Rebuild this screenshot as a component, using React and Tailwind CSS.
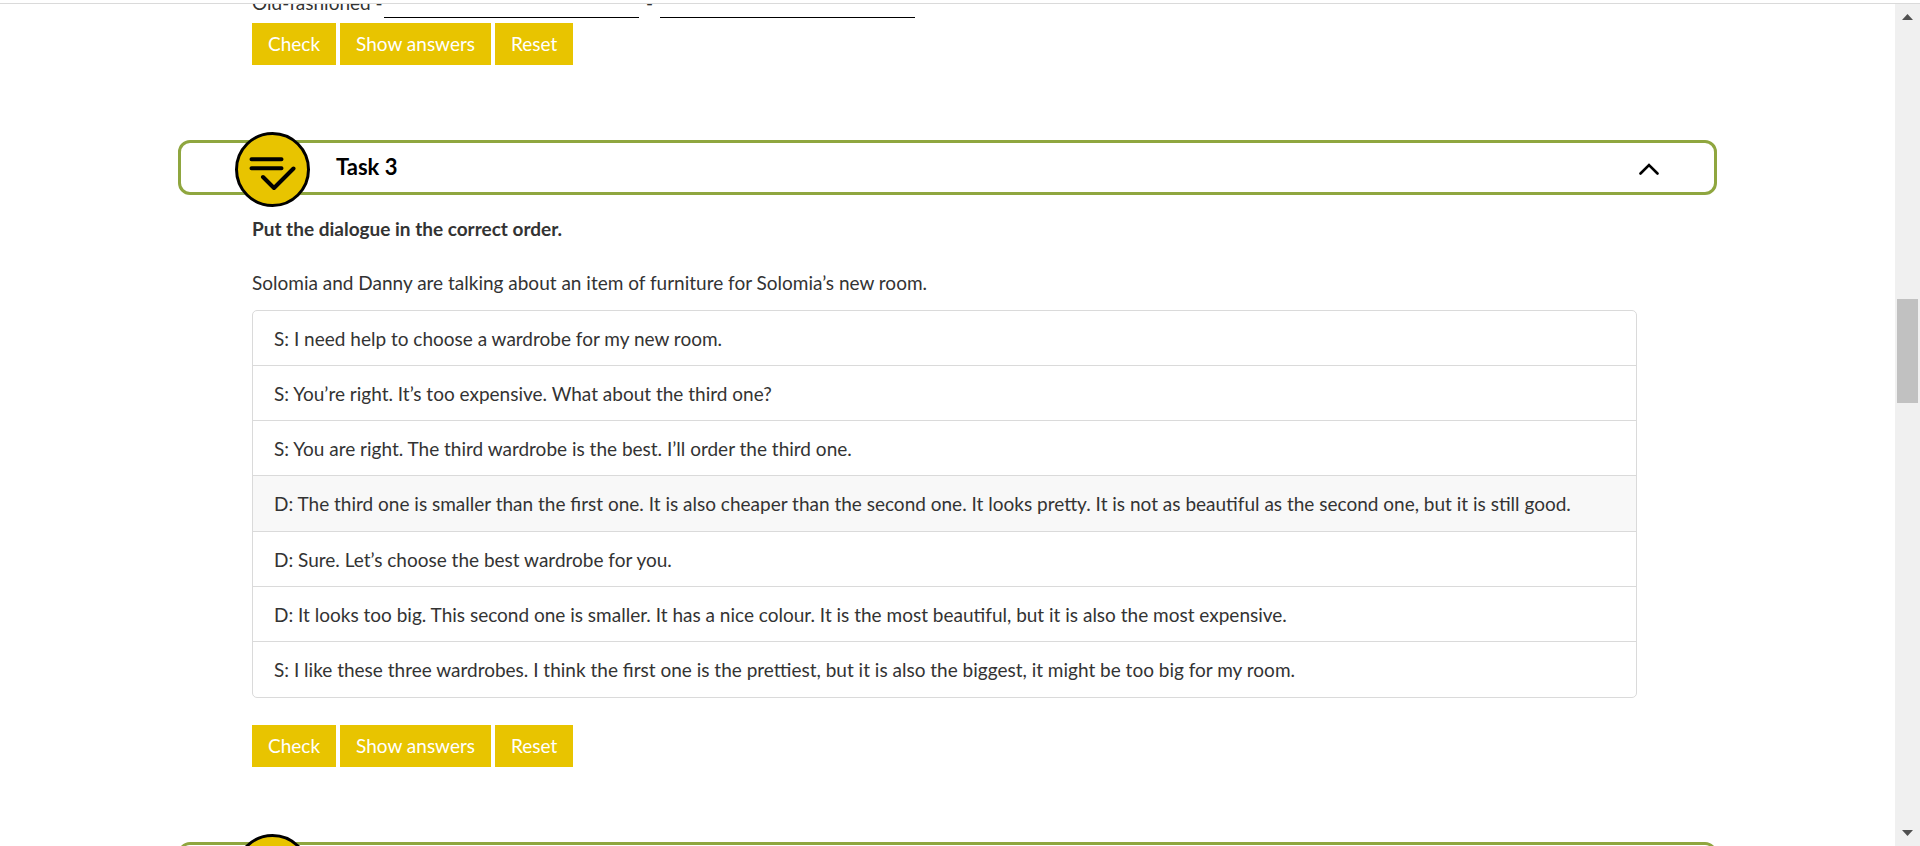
import { useState } from 'react';

const sentences = [
  'S: I need help to choose a wardrobe for my new room.',
  'S: You’re right. It’s too expensive. What about the third one?',
  'S: You are right. The third wardrobe is the best. I’ll order the third one.',
  'D: The third one is smaller than the first one. It is also cheaper than the second one. It looks pretty. It is not as beautiful as the second one, but it is still good.',
  'D: Sure. Let’s choose the best wardrobe for you.',
  'D: It looks too big. This second one is smaller. It has a nice colour. It is the most beautiful, but it is also the most expensive.',
  'S: I like these three wardrobes. I think the first one is the prettiest, but it is also the biggest, it might be too big for my room.',
];

const TaskIcon = () => (
  <svg
    className="absolute left-[54px] -top-[11px] w-[75px] h-[75px]"
    viewBox="0 0 75 75"
    fill="none"
    stroke="#000"
    strokeLinecap="round"
    strokeLinejoin="round"
    aria-hidden="true"
  >
    <circle cx="37.5" cy="37.5" r="36" fill="#e8c400" strokeWidth="3" />
    <path strokeWidth="4" d="M16.5 27.3h30M16.5 36.3h30M28 45l11 11L58.500 36.500" />
  </svg>
);

const TaskHeader = ({ title, open, onToggle }) => (
  <button
    type="button"
    onClick={onToggle}
    aria-expanded={open}
    className="relative flex w-full h-[55px] shrink-0 items-center justify-between rounded-xl border-3 border-[#8fa63f] pl-[155px] pr-[55px] text-[22px] leading-7 font-bold text-black"
  >
    <TaskIcon />
    <span className="pb-0.5">{title}</span>
    <svg
      className={`w-5 h-3.5 ${open ? '' : 'rotate-180'}`}
      viewBox="0 0 20 14"
      fill="none"
      stroke="#000"
      strokeWidth="2.600"
      strokeLinecap="round"
      aria-hidden="true"
    >
      <path d="M1.500 12.500L10 4l8.500 8.500" />
    </svg>
  </button>
);

const TaskButton = ({ children }) => (
  <button type="button" className="h-[42px] bg-[#e8c400] px-4 text-white">
    {children}
  </button>
);

const TaskButtons = () => (
  <div className="flex gap-1">
    <TaskButton>Check</TaskButton>
    <TaskButton>Show answers</TaskButton>
    <TaskButton>Reset</TaskButton>
  </div>
);

const Scrollbar = () => (
  <div className="flex w-[25px] shrink-0 flex-col items-center justify-between bg-[#f0f0f0]" aria-hidden="true">
    <svg className="mt-[10px] w-[11px] h-[6px]" viewBox="0 0 11 6" fill="#505050">
      <path d="M5.500 0L11 6H0z" />
    </svg>
    <div className="flex w-full grow flex-col items-center pt-[279px]">
      <div className="h-[104px] w-[21px] bg-[#c1c1c1]" />
    </div>
    <svg className="mb-[10px] w-[11px] h-[6px]" viewBox="0 0 11 6" fill="#505050">
      <path d="M0 0h11L5.500 6z" />
    </svg>
  </div>
);

const App = () => {
  const [open, setOpen] = useState(true);
  const [nextOpen, setNextOpen] = useState(false);

  return (
    <div className="flex h-screen flex-col overflow-hidden bg-white pt-[3px] font-['Lato',sans-serif] text-[19px] leading-6 text-[#333]">
      <div className="flex min-h-0 grow border-t border-[#dadada]">
        <main className="min-w-0 grow overflow-hidden px-[178px]">
          <section className="pl-[74px] pr-20">
            <div className="-mt-[13px] mb-[5px] flex items-start whitespace-nowrap">
              <span className="w-[132px]">Old-fashioned -</span>
              <input type="text" aria-label="Comparative" className="h-[27px] w-[255px] border-b border-black outline-none" />
              <span className="w-[21px] text-center">-</span>
              <input type="text" aria-label="Superlative" className="h-[27px] w-[255px] border-b border-black outline-none" />
            </div>
            <TaskButtons />
          </section>

          <div className="mt-[75px]">
            <TaskHeader title="Task 3" open={open} onToggle={() => setOpen(!open)} />
          </div>
          {open && (
            <section className="pl-[74px] pr-20 pt-[22px]">
              <p className="font-bold">Put the dialogue in the correct order.</p>
              <p className="mt-[30px]">
                Solomia and Danny are talking about an item of furniture for Solomia’s new room.
              </p>
              <ul className="mt-[15px] grid min-h-[388px] auto-rows-fr overflow-hidden rounded-[5px] border border-[#dadada] divide-y divide-[#dadada]">
                {sentences.map((sentence) => (
                  <li
                    key={sentence}
                    className={`flex cursor-move items-center px-[21px] pt-3.5 pb-3 ${
                      sentence.startsWith('D: The third') ? 'bg-[#f8f8f8]' : ''
                    }`}
                  >
                    {sentence}
                  </li>
                ))}
              </ul>
              <div className="mt-[27px]">
                <TaskButtons />
              </div>
            </section>
          )}

          <div className="mt-[75px]">
            <TaskHeader title="Task 4" open={nextOpen} onToggle={() => setNextOpen(!nextOpen)} />
          </div>
        </main>
        <Scrollbar />
      </div>
    </div>
  );
};

export default App;
